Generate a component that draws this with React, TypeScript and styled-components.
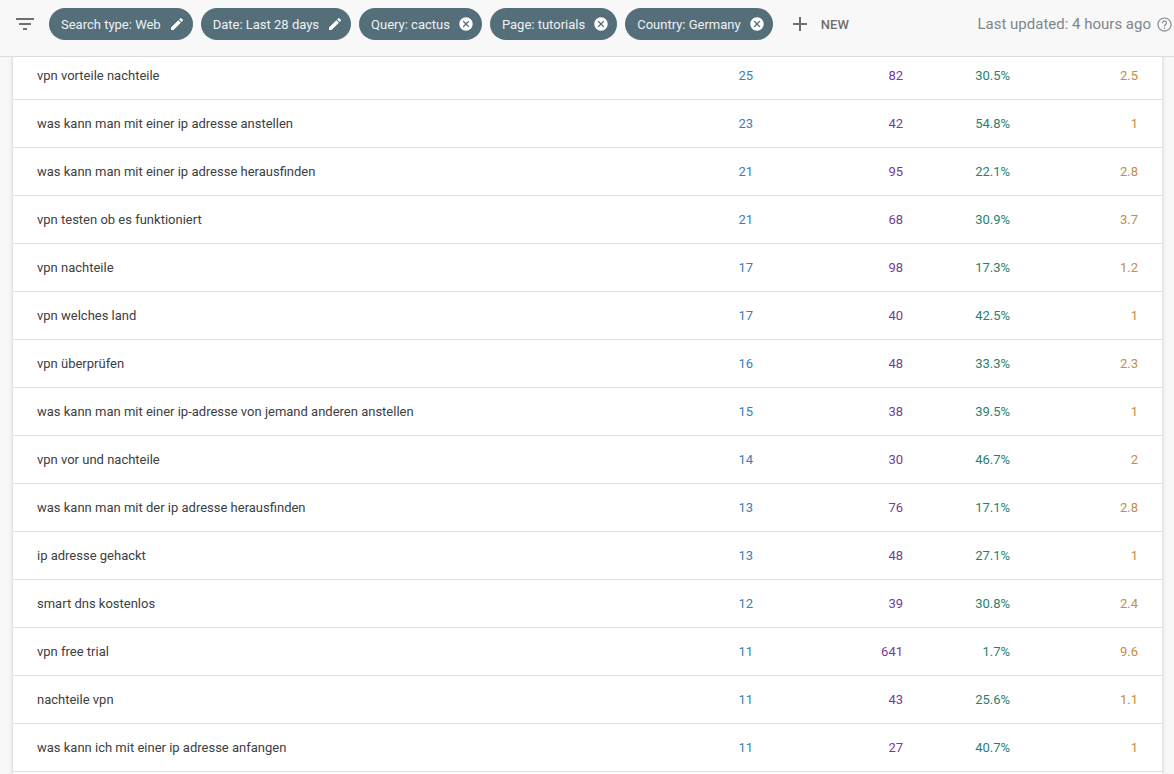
import React from "react";
import styled, { createGlobalStyle } from "styled-components";

const Global = createGlobalStyle`
  html, body { margin: 0; padding: 0; height: 100%; overflow: hidden; background: #f8f8f8; }
  body { font-family: Roboto, "Liberation Sans", sans-serif; }
`;

const Page = styled.div`
  width: 1174px;
  height: 774px;
  overflow: hidden;
  display: flex;
  flex-direction: column;
`;

const Toolbar = styled.header`
  position: relative;
  z-index: 2;
  flex: none;
  height: 57px;
  box-sizing: border-box;
  display: flex;
  align-items: center;
  padding: 0 2px 8px 16px;
  background: #f8f8f8;
  border-bottom: 1px solid #dcdcdc;
`;

const FilterButton = styled.svg`
  width: 18px;
  height: 12px;
  margin-right: 15px;
  flex: none;
`;

const Chips = styled.div`
  display: flex;
  gap: 8px;
`;

const Chip = styled.div`
  height: 32px;
  box-sizing: border-box;
  display: flex;
  align-items: center;
  gap: 8px;
  padding: 0 8px 0 12px;
  border-radius: 16px;
  background: #546e7a;
  color: #eef2f3;
  font-size: 13px;
  white-space: nowrap;
`;

const ChipIcon = styled.svg`
  width: 16px;
  height: 16px;
  flex: none;
  fill: #fff;
`;

const NewButton = styled.div`
  display: flex;
  align-items: center;
  gap: 13px;
  margin-left: 19px;
  color: #6f6f6f;
  font-size: 13px;
  font-weight: 500;
  letter-spacing: 0.2px;
`;

const PlusIcon = styled.svg`
  width: 16px;
  height: 16px;
  stroke: #6f6f6f;
  stroke-width: 2;
  flex: none;
`;

const Updated = styled.div`
  margin-left: auto;
  display: flex;
  align-items: center;
  gap: 6px;
  color: #80868b;
  font-size: 15px;
  white-space: nowrap;
`;

const HelpIcon = styled.svg`
  width: 15px;
  height: 15px;
  flex: none;
`;

const Card = styled.main`
  flex: none;
  width: 1149px;
  margin: -5px 0 0 13px;
  background: #fff;
  box-shadow: 0 0 4px rgba(60, 64, 67, 0.28);
`;

const Row = styled.div`
  height: 48px;
  box-sizing: border-box;
  display: grid;
  grid-template-columns: 1fr 100px 150px 107px 128px;
  align-items: center;
  padding: 0 24px;
  border-bottom: 1px solid #e0e0e0;
  font-size: 13px;
`;

const Query = styled.div`
  color: #3c4043;
`;

const Metric = styled.div<{ $color: string }>`
  text-align: right;
  color: ${(p) => p.$color};
`;

const rows: [string, string, string, string, string][] = [
  ["vpn vorteile nachteile", "25", "82", "30.5%", "2.5"],
  ["was kann man mit einer ip adresse anstellen", "23", "42", "54.8%", "1"],
  ["was kann man mit einer ip adresse herausfinden", "21", "95", "22.1%", "2.8"],
  ["vpn testen ob es funktioniert", "21", "68", "30.9%", "3.7"],
  ["vpn nachteile", "17", "98", "17.3%", "1.2"],
  ["vpn welches land", "17", "40", "42.5%", "1"],
  ["vpn überprüfen", "16", "48", "33.3%", "2.3"],
  ["was kann man mit einer ip-adresse von jemand anderen anstellen", "15", "38", "39.5%", "1"],
  ["vpn vor und nachteile", "14", "30", "46.7%", "2"],
  ["was kann man mit der ip adresse herausfinden", "13", "76", "17.1%", "2.8"],
  ["ip adresse gehackt", "13", "48", "27.1%", "1"],
  ["smart dns kostenlos", "12", "39", "30.8%", "2.4"],
  ["vpn free trial", "11", "641", "1.7%", "9.6"],
  ["nachteile vpn", "11", "43", "25.6%", "1.1"],
  ["was kann ich mit einer ip adresse anfangen", "11", "27", "40.7%", "1"],
  ["", "", "", "", ""],
];

const metricColors = ["#3a7fb3", "#783a96", "#1f8270", "#c88c3e"];

const Pencil = () => (
  <ChipIcon viewBox="0 0 24 24">
    <path d="M3 17.25V21h3.75L17.81 9.94l-3.75-3.75L3 17.25zM20.71 7.04a1 1 0 0 0 0-1.41l-2.34-2.34a1 1 0 0 0-1.41 0l-1.83 1.83 3.75 3.75 1.83-1.83z" />
  </ChipIcon>
);

const Cancel = () => (
  <ChipIcon viewBox="0 0 24 24">
    <path d="M12 2C6.47 2 2 6.47 2 12s4.47 10 10 10 10-4.47 10-10S17.53 2 12 2zm5 13.59L15.59 17 12 13.41 8.41 17 7 15.59 10.59 12 7 8.41 8.41 7 12 10.59 15.59 7 17 8.41 13.41 12 17 15.59z" />
  </ChipIcon>
);

const chips: [string, React.ReactNode][] = [
  ["Search type: Web", <Pencil />],
  ["Date: Last 28 days", <Pencil />],
  ["Query: cactus", <Cancel />],
  ["Page: tutorials", <Cancel />],
  ["Country: Germany", <Cancel />],
];

export default function App() {
  return (
    <Page>
      <Global />
      <Toolbar>
        <FilterButton viewBox="0 0 18 12">
          <path d="M0 0h18v2H0zM3 5h12v2H3zM7 10h4v2H7z" fill="#6f6f6f" />
        </FilterButton>
        <Chips>
          {chips.map(([label, icon]) => (
            <Chip key={label}>
              {label}
              {icon}
            </Chip>
          ))}
        </Chips>
        <NewButton>
          <PlusIcon viewBox="0 0 16 16">
            <path d="M8 1v14M1 8h14" fill="none" />
          </PlusIcon>
          NEW
        </NewButton>
        <Updated>
          Last updated: 4 hours ago
          <HelpIcon viewBox="0 0 24 24">
            <circle cx="12" cy="12" r="10.5" fill="none" stroke="#80868b" strokeWidth="1.8" />
            <path d="M8.8 9.5a3.2 3.2 0 1 1 5 2.6c-1 .7-1.8 1.3-1.8 2.9" fill="none" stroke="#80868b" strokeWidth="1.8" />
            <circle cx="12" cy="18" r="1.2" fill="#80868b" />
          </HelpIcon>
        </Updated>
      </Toolbar>
      <Card>
        {rows.map((r, i) => (
          <Row key={i}>
            <Query>{r[0]}</Query>
            {metricColors.map((c, j) => (
              <Metric key={j} $color={c}>
                {r[j + 1]}
              </Metric>
            ))}
          </Row>
        ))}
      </Card>
    </Page>
  );
}
